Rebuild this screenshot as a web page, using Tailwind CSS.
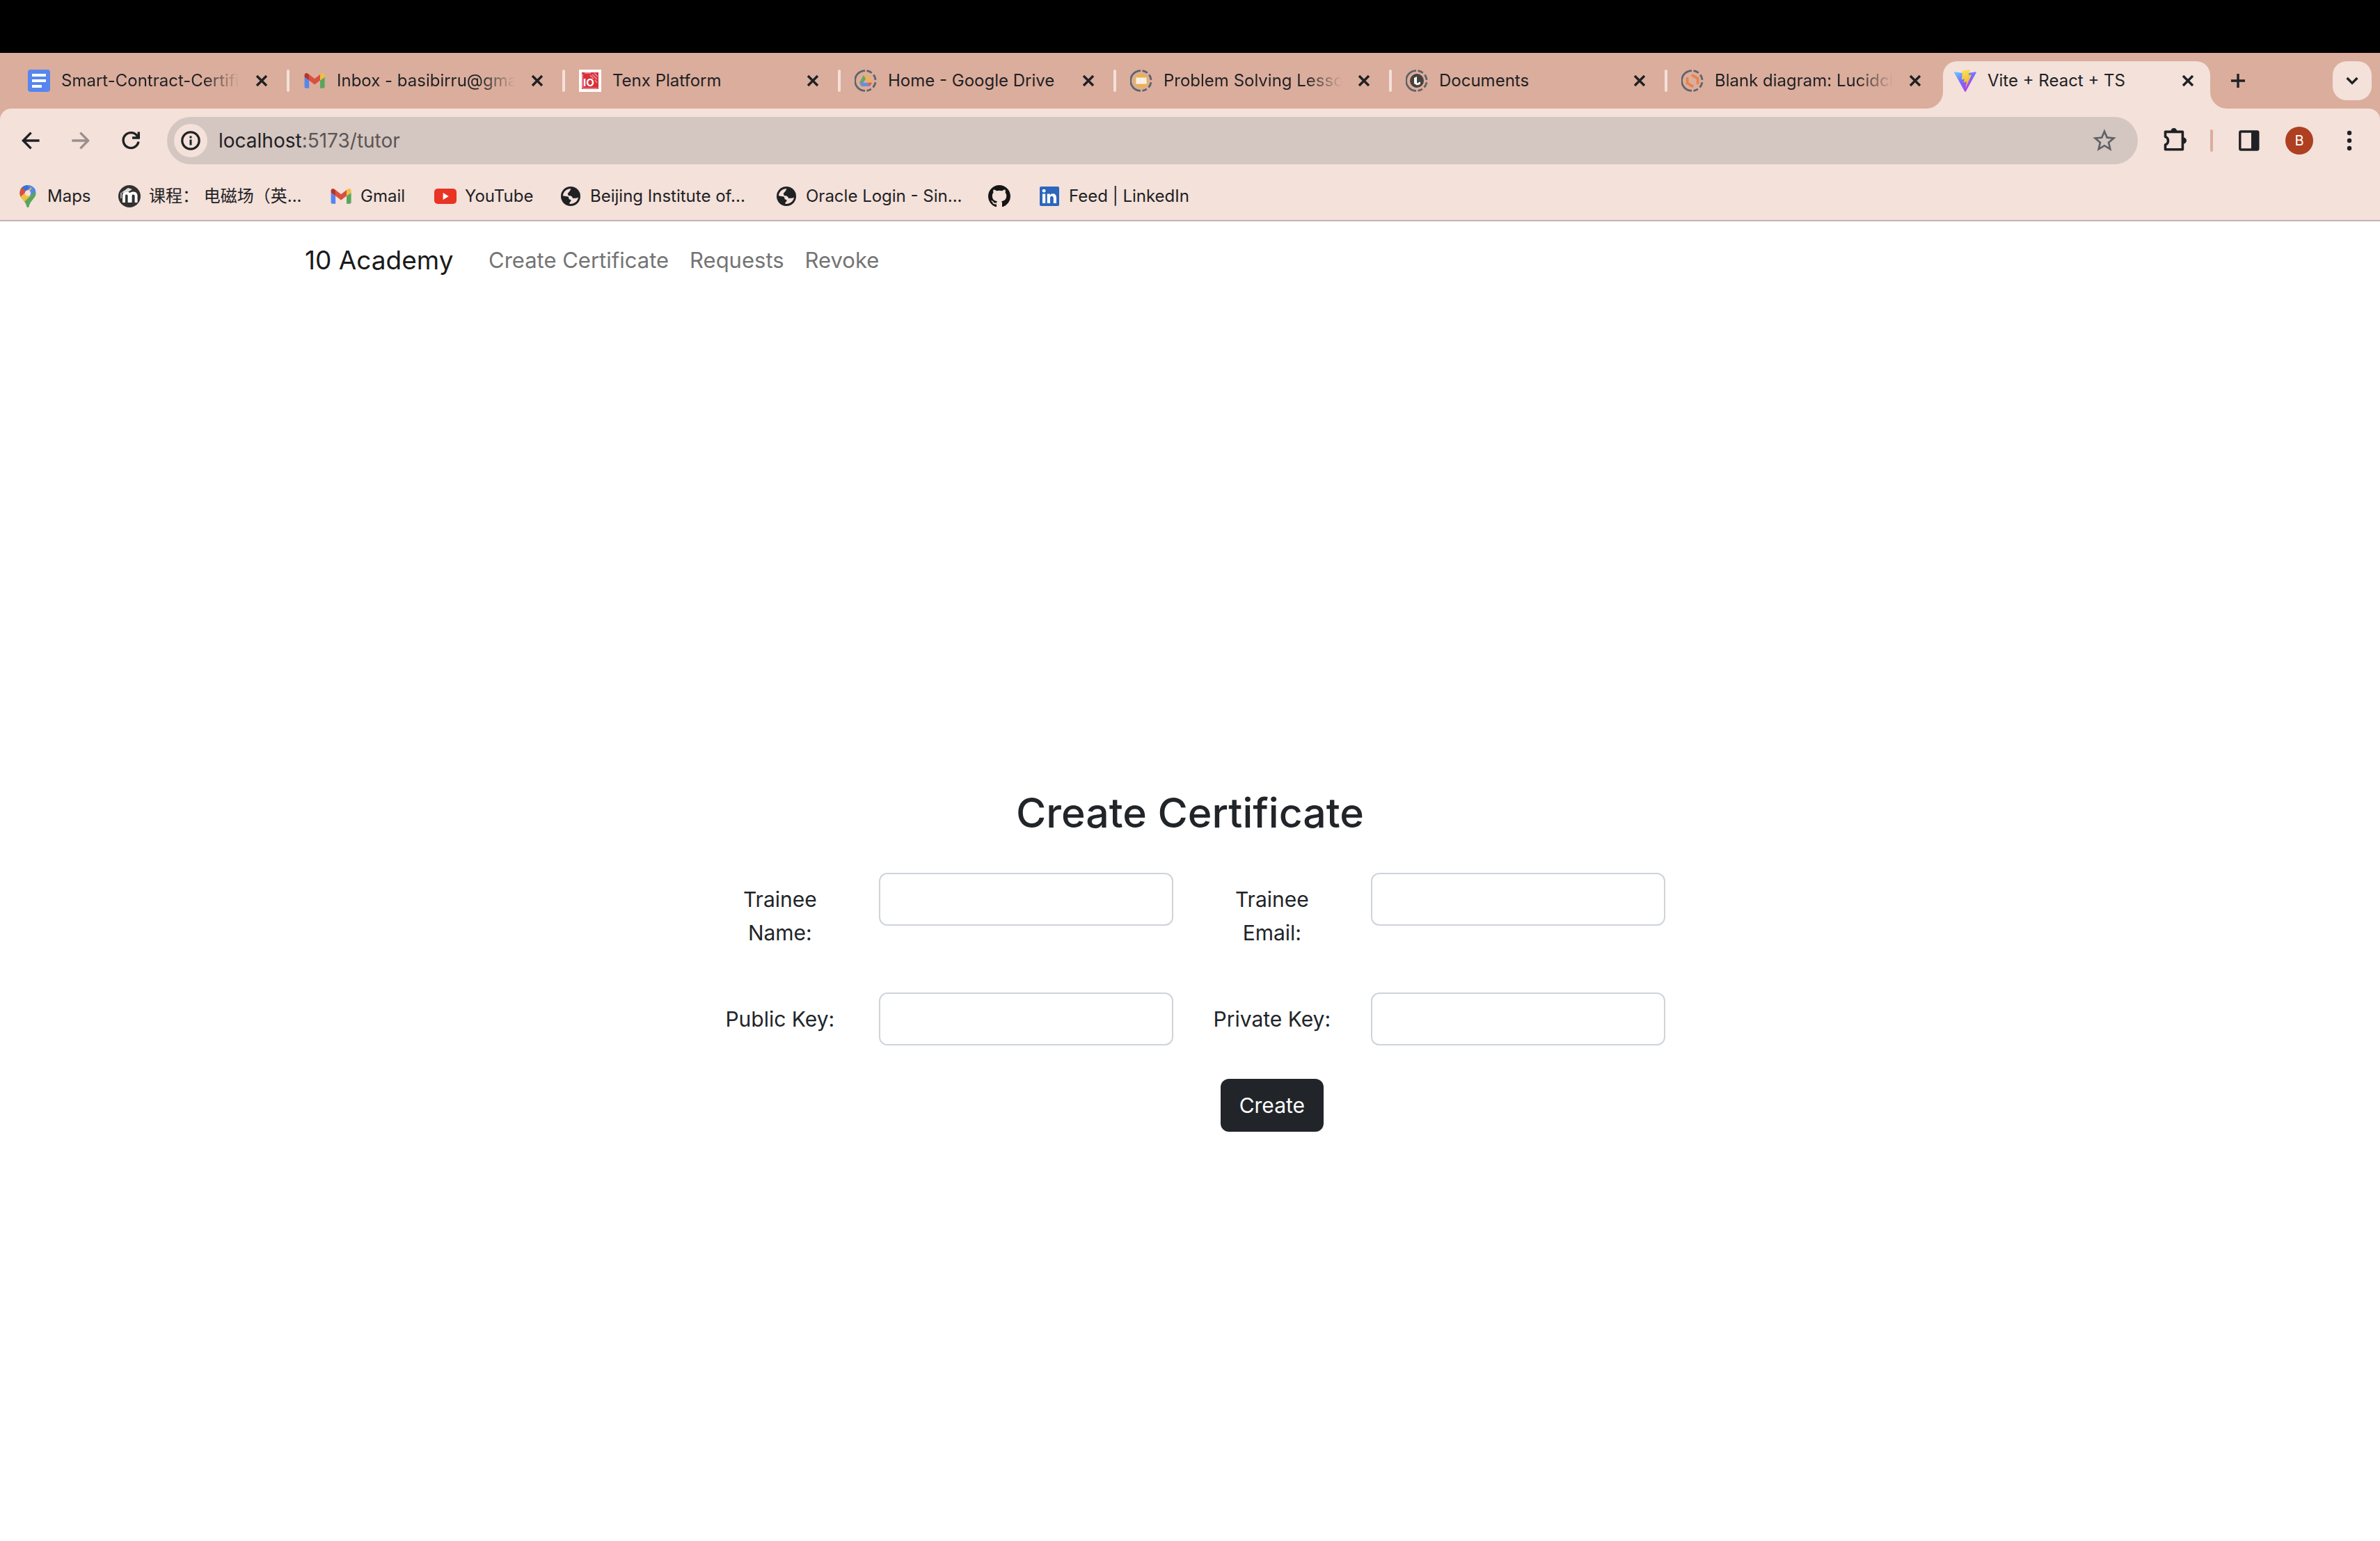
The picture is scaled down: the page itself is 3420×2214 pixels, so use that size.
<!DOCTYPE html>
<html lang="en">
<head>
<meta charset="utf-8">
<meta name="viewport" content="width=device-width, initial-scale=1">
<title>Vite + React + TS</title>
<script src="https://cdn.jsdelivr.net/npm/@tailwindcss/browser@4"></script>
</head>
<body class="flex min-h-screen flex-col overflow-x-hidden bg-white font-[Inter,'Noto_Sans_CJK_SC',sans-serif] text-[#212529]">

<svg class="hidden" aria-hidden="true">
  <symbol id="close" viewBox="0 0 32 32"><path d="M9 9l14 14M23 9L9 23" fill="none" stroke="#1f2124" stroke-width="3.4"/></symbol>
  <symbol id="ring" viewBox="0 0 32 32">
    <path d="M15 1.6A14.4 14.4 0 0 0 15 30.4" fill="none" stroke="#5f6368" stroke-width="2.8"/>
    <path d="M17.5 1.7A14.4 14.4 0 0 1 17.5 30.3" fill="none" stroke="#5f6368" stroke-width="2.8" stroke-dasharray="8 3.6"/>
  </symbol>
  <symbol id="gmail" viewBox="0 0 32 32">
    <g transform="translate(-15.6 -8.8) scale(.33)">
      <path fill="#5686ee" d="M58 108h14V74L52 59v43c0 3.32 2.69 6 6 6"/>
      <path fill="#58a65c" d="M120 108h14c3.32 0 6-2.69 6-6V59l-20 15"/>
      <path fill="#f2be42" d="M120 48v26l20-15v-8c0-7.42-8.47-11.65-14.4-7.2"/>
      <path fill="#d9503f" d="M72 74V48l24 18 24-18v26L96 92"/>
      <path fill="#b8332a" d="M52 51v8l20 15V48l-5.6-4.2c-5.94-4.45-14.4-.22-14.4 7.2"/>
    </g>
  </symbol>
  <symbol id="globe" viewBox="0 0 32 32">
    <circle cx="16" cy="16" r="14" fill="#1f2124"/>
    <path fill="#f3e1da" d="M4.8 15.2C5.4 9.4 10 5 16.8 4.9C15.6 6.2 15 7.2 15.2 8.4C13.2 8.6 13.8 11.4 11.6 11.4C12.6 13.6 11.6 15.2 15.2 15.2C16.6 15.2 18.6 16.6 19.2 19C21.2 18.4 23.4 19.6 27 17.6C26.2 23.2 21.6 27.4 14.4 27C14.4 25 14.6 23.6 16.4 23.4C16.8 21.6 16.4 20.6 14.4 20.4C12.8 20.2 14 16.8 12 16.4Z"/>
  </symbol>
</svg>

<header class="text-2xl text-[#1f2124]">
  <div class="h-[76px] bg-black"></div>

  <div role="tablist" class="flex h-20 items-end bg-[#dbad9c] pr-3 pl-5">
    <div role="tab" class="flex h-[68px] min-w-0 max-w-[396px] flex-1 items-center gap-4 pb-3 pl-5">
      <svg class="size-8 shrink-0" viewBox="0 0 32 32"><rect width="32" height="32" rx="4" fill="#5686ee"/><path d="M6 8h20M6 16h20M6 24h14" stroke="#fff" stroke-width="4"/></svg>
      <span class="min-w-0 flex-1 overflow-hidden whitespace-nowrap [mask-image:linear-gradient(to_right,#000_calc(100%-52px),transparent)]">Smart-Contract-Certificate</span>
      <button aria-label="Close tab" class="size-8 shrink-0"><svg class="size-8"><use href="#close"/></svg></button>
      <span class="ml-1 h-8 w-1 shrink-0 rounded-full bg-[#f3e1da]"></span>
    </div>
    <div role="tab" class="flex h-[68px] min-w-0 max-w-[396px] flex-1 items-center gap-4 pb-3 pl-5">
      <svg class="size-8 shrink-0"><use href="#gmail"/></svg>
      <span class="min-w-0 flex-1 overflow-hidden whitespace-nowrap [mask-image:linear-gradient(to_right,#000_calc(100%-52px),transparent)]">Inbox - basibirru@gmail.com</span>
      <button aria-label="Close tab" class="size-8 shrink-0"><svg class="size-8"><use href="#close"/></svg></button>
      <span class="ml-1 h-8 w-1 shrink-0 rounded-full bg-[#f3e1da]"></span>
    </div>
    <div role="tab" class="flex h-[68px] min-w-0 max-w-[396px] flex-1 items-center gap-4 pb-3 pl-5">
      <svg class="size-8 shrink-0" viewBox="0 0 32 32"><rect width="32" height="32" fill="#fff"/><rect x="4" y="4" width="24" height="24" fill="#d8303a"/><path d="M8 5h9M19 7l7 7M22 5l5 5M16 8l5 5M23 15l3 4M5 27h22M5 6v20" stroke="#e9929a" stroke-width="1.6" fill="none"/><text x="6" y="24" fill="#fff" font-family="Inter" font-weight="700" font-size="15">IO</text></svg>
      <span class="min-w-0 flex-1 overflow-hidden whitespace-nowrap">Tenx Platform</span>
      <button aria-label="Close tab" class="size-8 shrink-0"><svg class="size-8"><use href="#close"/></svg></button>
      <span class="ml-1 h-8 w-1 shrink-0 rounded-full bg-[#f3e1da]"></span>
    </div>
    <div role="tab" class="flex h-[68px] min-w-0 max-w-[396px] flex-1 items-center gap-4 pb-3 pl-5">
      <svg class="size-8 shrink-0" viewBox="0 0 32 32"><use href="#ring"/><path fill="#6aa564" d="M13 8h6L10 24L7 18.8z"/><path fill="#efb24f" d="M13 8h6l6 10.8h-5.8z"/><path fill="#6c8ce0" d="M9.8 18.8H19.5L22 24H10L7 18.8z"/><path fill="#dc5b45" d="M19.3 18.8H25L22 24z"/><path fill="#dbad9c" d="M16 13.4l3.2 5.4h-6.4z"/></svg>
      <span class="min-w-0 flex-1 overflow-hidden whitespace-nowrap">Home - Google Drive</span>
      <button aria-label="Close tab" class="size-8 shrink-0"><svg class="size-8"><use href="#close"/></svg></button>
      <span class="ml-1 h-8 w-1 shrink-0 rounded-full bg-[#f3e1da]"></span>
    </div>
    <div role="tab" class="flex h-[68px] min-w-0 max-w-[396px] flex-1 items-center gap-4 pb-3 pl-5">
      <svg class="size-8 shrink-0" viewBox="0 0 32 32"><use href="#ring"/><circle cx="16" cy="16" r="10" fill="#e8b34c"/><rect x="8.4" y="11.4" width="15.2" height="9.2" fill="#f9eee8"/></svg>
      <span class="min-w-0 flex-1 overflow-hidden whitespace-nowrap [mask-image:linear-gradient(to_right,#000_calc(100%-52px),transparent)]">Problem Solving Lessons</span>
      <button aria-label="Close tab" class="size-8 shrink-0"><svg class="size-8"><use href="#close"/></svg></button>
      <span class="ml-1 h-8 w-1 shrink-0 rounded-full bg-[#f3e1da]"></span>
    </div>
    <div role="tab" class="flex h-[68px] min-w-0 max-w-[396px] flex-1 items-center gap-4 pb-3 pl-5">
      <svg class="size-8 shrink-0" viewBox="0 0 32 32"><use href="#ring"/><circle cx="16" cy="16" r="10" fill="#47423f"/><path fill="#fff" d="M12 12l4-2v8.6l2 2.4-1.8 1.4L12 20zM17.4 19l3.6-1.6v3.2l-3.2 2z"/></svg>
      <span class="min-w-0 flex-1 overflow-hidden whitespace-nowrap">Documents</span>
      <button aria-label="Close tab" class="size-8 shrink-0"><svg class="size-8"><use href="#close"/></svg></button>
      <span class="ml-1 h-8 w-1 shrink-0 rounded-full bg-[#f3e1da]"></span>
    </div>
    <div role="tab" class="flex h-[68px] min-w-0 max-w-[396px] flex-1 items-center gap-4 pb-3 pl-5">
      <svg class="size-8 shrink-0" viewBox="0 0 32 32"><use href="#ring"/><path d="M8.6 11v8.4l8.4 5.2M15 7.6l8.6 5V21" fill="none" stroke="#e8834a" stroke-width="3.6" stroke-linejoin="round"/></svg>
      <span class="min-w-0 flex-1 overflow-hidden whitespace-nowrap [mask-image:linear-gradient(to_right,#000_calc(100%-52px),transparent)]">Blank diagram: Lucidchart</span>
      <button aria-label="Close tab" class="mr-6 size-8 shrink-0"><svg class="size-8"><use href="#close"/></svg></button>
    </div>
    <div role="tab" aria-selected="true" class="relative flex h-[68px] min-w-0 max-w-[384px] flex-1 items-center gap-4 rounded-t-[20px] bg-[#f3e1da] px-4 pb-3">
      <svg class="absolute bottom-0 -left-6 size-6" viewBox="0 0 24 24"><path fill="#f3e1da" d="M24 0v24H0A24 24 0 0 0 24 0"/></svg>
      <svg class="absolute -right-6 bottom-0 size-6" viewBox="0 0 24 24"><path fill="#f3e1da" d="M0 0v24h24A24 24 0 0 1 0 0"/></svg>
      <svg class="size-8 shrink-0" viewBox="0 0 32 32">
        <defs>
          <linearGradient id="va" x1="0" y1="0" x2=".6" y2="1"><stop stop-color="#5ed0ff"/><stop offset=".5" stop-color="#7d6bf6"/><stop offset="1" stop-color="#b53af0"/></linearGradient>
          <linearGradient id="vb" x1=".4" y1="0" x2=".6" y2="1"><stop stop-color="#f9e04e"/><stop offset="1" stop-color="#f2a93b"/></linearGradient>
        </defs>
        <path fill="url(#va)" d="M.6 3.2L16 5.6L31.4 3.2Q32.2 3.2 31.8 4.2L16.8 31.4Q16 32.4 15.3 31.4L.1 4.2Q-.2 3.2 .6 3.2"/>
        <path fill="url(#vb)" d="M12 1.6L23 0L20.6 8L25 7.4L16.4 27L18 17.2L13.6 18.4L15 13.6L11 14.4z"/>
      </svg>
      <span class="min-w-0 flex-1 overflow-hidden whitespace-nowrap">Vite + React + TS</span>
      <button aria-label="Close tab" class="size-8 shrink-0"><svg class="size-8"><use href="#close"/></svg></button>
    </div>
    <button aria-label="New tab" class="mb-6 ml-6 size-8 shrink-0"><svg class="size-8" viewBox="0 0 32 32"><path d="M16 6v20M6 16h20" stroke="#1f2124" stroke-width="3.4"/></svg></button>
    <button aria-label="Search tabs" class="mb-3 ml-auto grid size-14 shrink-0 place-items-center rounded-[20px] bg-[#f3e1da]"><svg class="size-8" viewBox="0 0 32 32"><path d="M8.6 12L16 19.4L23.4 12" fill="none" stroke="#1f2124" stroke-width="3.4"/></svg></button>
  </div>

  <div class="bg-[#dbad9c]">
    <div class="rounded-t-2xl border-b-2 border-[#c0b4b2] bg-[#f3e1da]">
      <div class="flex items-center gap-8 px-6 py-3">
        <button aria-label="Back" class="size-10 shrink-0"><svg viewBox="0 0 40 40" fill="none" stroke="#1f2124" stroke-width="3.4"><path d="M32.6 20H10M20.6 8.6L9.4 20l11.2 11.4"/></svg></button>
        <button aria-label="Forward" class="size-10 shrink-0"><svg viewBox="0 0 40 40" fill="none" stroke="#9a8f8c" stroke-width="3.4"><path d="M7.4 20H30M19.4 8.6L30.6 20L19.4 31.4"/></svg></button>
        <button aria-label="Reload" class="size-10 shrink-0"><svg viewBox="0 0 40 40" fill="none" stroke="#1f2124" stroke-width="3.4"><path d="M31 21.5A11 11 0 1 1 28.5 12.4L31 15.5M31.3 7.4V16H22"/></svg></button>
        <div class="flex h-[68px] min-w-0 flex-1 items-center rounded-full bg-[#d4c6c1] pr-7 pl-[10px]">
          <button aria-label="View site information" class="grid size-12 shrink-0 place-items-center rounded-full bg-[#f3e1da]"><svg class="size-8" viewBox="0 0 32 32"><circle cx="16" cy="16" r="12.2" fill="none" stroke="#1f2124" stroke-width="3.2"/><path d="M16 14.6v8M16 9.4v3" stroke="#1f2124" stroke-width="3"/></svg></button>
          <div role="textbox" contenteditable="true" aria-label="Address" class="ml-4 flex-1 truncate text-[28px]/9 text-[#5b5654]"><span class="text-[#1f2124]">localhost</span>:5173/tutor</div>
          <button aria-label="Bookmark this tab" class="size-10 shrink-0"><svg viewBox="0 0 24 24" fill="#5f6368"><path d="M22 9.24l-7.19-.62L12 2 9.19 8.63 2 9.24l5.46 4.73L5.82 21 12 17.27 18.18 21l-1.63-7.03L22 9.24zM12 15.4l-3.76 2.27 1-4.28-3.32-2.88 4.38-.38L12 6.1l1.71 4.04 4.38.38-3.32 2.88 1 4.28L12 15.4z"/></svg></button>
        </div>
        <button aria-label="Extensions" class="size-10 shrink-0"><svg viewBox="0 0 40 40"><path d="M7.5 7.4H32.4V32.8H7.5V26C12.8 24 12.8 16.4 7.5 14.4Z" fill="none" stroke="#1f2124" stroke-width="3.6" stroke-linejoin="round"/><path d="M15.4 6.4a4.4 4.4 0 0 1 8.8 0zM33.4 15.4a4.6 4.6 0 0 1 0 9.2z" fill="#1f2124"/></svg></button>
        <span class="h-8 w-1 shrink-0 rounded-full bg-[#dbad9c]"></span>
        <button aria-label="Side panel" class="size-10 shrink-0"><svg viewBox="0 0 40 40"><rect x="6.8" y="7" width="26" height="26" rx="1.5" fill="none" stroke="#1f2124" stroke-width="3.4"/><path d="M23 7h10v26H23z" fill="#1f2124"/></svg></button>
        <button aria-label="Profile" class="size-10 shrink-0 rounded-full bg-[#ae3f20] text-xl/10 text-white">B</button>
        <button aria-label="Menu" class="size-10 shrink-0"><svg viewBox="0 0 40 40" fill="#1f2124"><circle cx="20" cy="9" r="3.2"/><circle cx="20" cy="20" r="3.2"/><circle cx="20" cy="31" r="3.2"/></svg></button>
      </div>

      <nav aria-label="Bookmarks" class="flex h-[68px] items-center pl-6">
        <a href="#" class="flex w-[146px] items-center gap-3"><svg class="size-8 shrink-0" viewBox="0 0 32 32"><clipPath id="pin"><path d="M16 0C9 0 4.4 5.2 4.4 11.6C4.4 19.6 12.6 21.4 14.4 31Q16 33.4 17.6 31C19.4 21.4 27.6 19.6 27.6 11.6C27.6 5.2 23 0 16 0"/></clipPath><g clip-path="url(#pin)"><rect width="32" height="32" fill="#58a65c"/><path fill="#5686ee" d="M6 4L16-2L28 6L16 14z"/><path fill="#3a6fd8" d="M4 3L14-2L18 4L12 10z"/><path fill="#d9503f" d="M2 5L7 3L14 10L5 19L2 18z"/><path fill="#f2be42" d="M4 18L21 3L22 13L9 26z"/><path fill="#5686ee" d="M16 11L25 1L31 10L28 8L20 15z"/></g><circle cx="16" cy="11.4" r="4.2" fill="#f3e1da"/></svg>Maps</a>
        <a href="#" class="flex w-[304px] items-center gap-3 whitespace-nowrap"><svg class="size-8 shrink-0" viewBox="0 0 32 32"><circle cx="16" cy="16" r="16" fill="#333130"/><path d="M8 25V15Q8 11.6 11.8 11.6T15.6 15V25M17.6 25V15Q17.6 11.6 21.4 11.6T25.6 15V25" fill="none" stroke="#fff" stroke-width="4"/><path d="M4 11L14 4L20 6L14 10z" fill="#ddd"/><path d="M4 11v8" stroke="#ddd" stroke-width="1.4"/></svg>课程： 电磁场（英...</a>
        <a href="#" class="flex w-[150px] items-center gap-3"><svg class="size-8 shrink-0"><use href="#gmail"/></svg>Gmail</a>
        <a href="#" class="flex w-[180px] items-center gap-3"><svg class="size-8 shrink-0" viewBox="0 0 32 32"><rect y="5" width="32" height="22" rx="5" fill="#e93323"/><path d="M12.6 11v10l8.2-5z" fill="#fff"/></svg>YouTube</a>
        <a href="#" class="flex w-[310px] items-center gap-3 whitespace-nowrap"><svg class="size-8 shrink-0"><use href="#globe"/></svg>Beijing Institute of...</a>
        <a href="#" class="flex w-[306px] items-center gap-3 whitespace-nowrap"><svg class="size-8 shrink-0"><use href="#globe"/></svg>Oracle Login - Sin...</a>
        <a href="#" aria-label="GitHub" class="flex w-[72px] items-center"><svg class="size-8 shrink-0" viewBox="0 0 16 16" fill="#161515"><path d="M8 0C3.58 0 0 3.58 0 8c0 3.54 2.29 6.53 5.47 7.59.4.07.55-.17.55-.38 0-.19-.01-.82-.01-1.49-2.01.37-2.53-.49-2.69-.94-.09-.23-.48-.94-.82-1.13-.28-.15-.68-.52-.01-.53.63-.01 1.08.58 1.23.82.72 1.21 1.87.87 2.33.66.07-.52.28-.87.51-1.07-1.78-.2-3.64-.89-3.64-3.95 0-.87.31-1.59.82-2.15-.08-.2-.36-1.02.08-2.12 0 0 .67-.21 2.2.82.64-.18 1.32-.27 2-.27s1.36.09 2 .27c1.53-1.04 2.2-.82 2.2-.82.44 1.1.16 1.92.08 2.12.51.56.82 1.27.82 2.15 0 3.07-1.87 3.75-3.65 3.95.29.25.54.73.54 1.48 0 1.07-.01 1.93-.01 2.2 0 .21.15.46.55.38A8.01 8.01 0 0 0 16 8c0-4.42-3.58-8-8-8"/></svg></a>
        <a href="#" class="flex items-center gap-3 whitespace-nowrap"><svg class="size-8 shrink-0" viewBox="0 0 32 32"><rect x="2" y="2" width="28" height="28" rx="2" fill="#2c66bd"/><path d="M6 12.6h4.2V26H6zM12.8 12.6h4v1.9c.8-1.4 2.2-2.2 4-2.2 4 0 5.2 2.6 5.2 6.4V26h-4.2v-6.6c0-1.8-.3-3.6-2.3-3.6s-2.5 1.6-2.5 3.4V26h-4.2z" fill="#fff"/><circle cx="8.1" cy="8.2" r="2.4" fill="#fff"/></svg>Feed | LinkedIn</a>
      </nav>
    </div>
  </div>
</header>

<nav aria-label="Main" class="mx-auto flex h-28 w-full max-w-[2640px] items-center px-12 text-[31px] text-[#747474]">
  <a href="#" class="mr-12 w-[216px] text-[37px] whitespace-nowrap text-[#1a1a1a]">10 Academy</a>
  <div class="flex gap-[30px]">
    <a href="#">Create Certificate</a>
    <a href="#">Requests</a>
    <a href="#">Revoke</a>
  </div>
</nav>

<main class="flex flex-1 flex-col items-center justify-center pt-28">
  <h2 class="mb-12 text-[59px]/[76px] font-medium">Create Certificate</h2>
  <form class="grid w-full max-w-[1414px] grid-cols-[1fr_2fr_1fr_2fr] gap-y-12 text-[30px]/[48px]">
    <label for="name" class="px-6 pt-[14px] pb-[14px] text-center">Trainee Name:</label>
    <div class="px-6"><input id="name" type="text" class="h-[76px] w-full rounded-xl border-2 border-[#ced4da] bg-white px-6"></div>
    <label for="email" class="px-6 pt-[14px] pb-[14px] text-center">Trainee Email:</label>
    <div class="px-6"><input id="email" type="email" class="h-[76px] w-full rounded-xl border-2 border-[#ced4da] bg-white px-6"></div>
    <label for="public" class="px-6 pt-[14px] text-center whitespace-nowrap">Public Key:</label>
    <div class="px-6"><input id="public" type="text" class="h-[76px] w-full rounded-xl border-2 border-[#ced4da] bg-white px-6"></div>
    <label for="private" class="px-6 pt-[14px] text-center whitespace-nowrap">Private Key:</label>
    <div class="px-6"><input id="private" type="text" class="h-[76px] w-full rounded-xl border-2 border-[#ced4da] bg-white px-6"></div>
    <button type="submit" class="col-start-3 h-[76px] w-[148px] justify-self-center rounded-xl bg-[#212529] text-white">Create</button>
  </form>
</main>
</body>
</html>
